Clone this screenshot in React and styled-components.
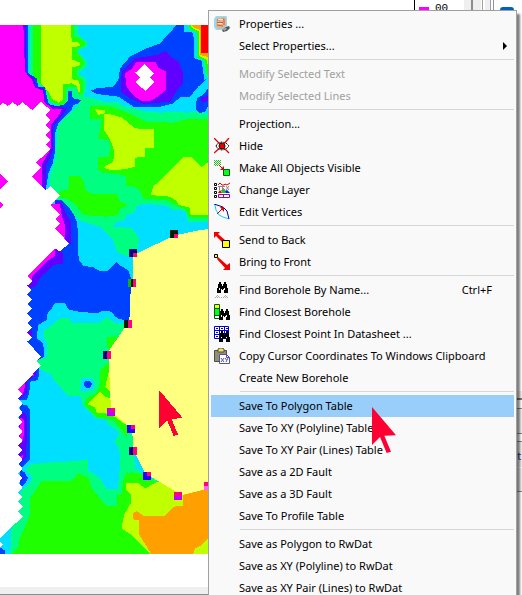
import React from 'react'
import styled, { createGlobalStyle, css } from 'styled-components'

const color = {
    magenta: '#ff00ff',
    purple: '#6000ff',
    blue: '#0040ff',
    cyan: '#00dfff',
    spring: '#00ff80',
    green: '#20ff00',
    lime: '#bfff00',
    orange: '#ff9f00',
    red: '#ff0000',
    polygon: '#ffff80',
    pink: '#ff0080',
    cursor: '#ff0033',
}

// contour bands, painted from back to front
const bands = [
    ['spring', '90,75 234,75 234,100 246,115 260,122 260,140 246,145 230,155 250,172 262,185 262,200 246,210 236,222 256,235 260,245 258,270 250,288 280,295 310,305 350,305 370,318 400,325 440,335 480,338 530,335 560,338 600,335 627,342 627,665 565,665 555,632 520,630 495,615 430,612 410,618 400,640 380,643 375,660 345,668 340,680 395,684 405,698 417,715 412,750 385,770 352,757 340,720 310,690 300,680 240,662 205,630 185,600 165,598 150,560 150,530 168,470 172,380 190,358 215,335 240,310 205,320 180,320 140,300 130,270 115,250 90,225'],
    ['green', '270,320 300,316 340,322 400,345 440,365 520,368 560,358 627,356 627,653 600,655 570,652 555,628 520,612 500,600 430,597 420,572 405,560 378,558 378,528 345,522 310,518 293,510 293,472 325,470 330,450 328,422 295,415 300,390 305,357 270,357'],
    ['lime', '285,328 315,330 315,340 295,345'],
    ['lime', '312,343 330,343 365,352 385,368 405,385 462,388 462,443 435,445 435,470 405,473 405,500 375,508 330,510 312,503 318,496 340,485 342,450 330,418 312,390'],
    ['lime', '550,471 575,471 605,501 627,485 627,645 572,645 568,622 535,615 530,603 510,590 452,585 460,560'],
    ['green', '207,528 240,528 252,545 255,570 280,582 350,582 360,605 385,615 360,625 355,645 320,650 250,645 235,625 215,605 205,598 175,590 178,575 205,568'],
    ['green', '100,75 222,75 222,108 240,115 254,125 254,138 240,142 230,155 250,180 252,195 230,212 230,225 250,243 250,280 238,285 230,262 200,262 195,310 180,316 150,305 145,280 130,258 105,240 100,215'],
    ['lime', '123,75 213,75 215,125 238,128 240,138 215,143 215,178 240,188 238,197 215,203 215,238 238,242 240,275 233,275 232,258 215,250 190,252 188,300 175,308 155,295 145,275 123,250'],
    ['blue', '0,75 85,75 85,220 110,235 115,260 135,262 145,310 160,320 190,315 205,300 205,272 215,272 218,295 245,300 235,310 220,315 215,330 175,370 165,400 166,450 158,490 145,520 137,572 90,560 0,400'],
    ['purple', '0,75 78,75 78,220 100,232 108,258 130,264 140,312 200,325 188,345 158,380 158,450 152,470 137,500 137,570 90,560 0,400'],
    ['magenta', '0,75 70,75 75,215 95,238 105,262 130,272 132,305 160,328 185,328 180,340 153,375 153,445 127,490 127,562 90,560 0,400'],
    ['blue', '165,600 185,600 205,620 222,645 232,670 236,780 250,797 280,802 300,813 325,812 350,785 360,797 385,810 395,840 397,870 388,960 360,958 345,950 340,940 325,932 310,932 290,940 235,935 205,928 195,908 165,908 155,925 143,940 140,960 115,975 110,1015 130,1030 132,1070 115,1080 60,1025 70,828 150,740'],
    ['purple', '165,603 185,607 195,635 213,665 213,730 200,735 165,700'],
    ['magenta', '150,613 180,613 185,645 196,680 196,720 165,700'],
    ['purple', '165,740 188,760 188,790 160,795 140,815 125,828 114,845 108,858 90,865 75,850 75,828'],
    ['magenta', '165,745 165,768 140,785 97,830 95,842 80,828'],
    ['purple', '82,997 96,990 96,1012'],
    ['spring', '175,960 185,953 205,953 215,968 300,968 320,950 345,970 390,975 400,1310 420,1420 627,1420 627,1662 30,1662 33,1590 55,1550 65,1470 80,1460 95,1440 95,1430 75,1410 95,1392 155,1387 230,1383 263,1378 265,1410 300,1435 320,1467 353,1467 360,1400 358,1345 343,1325 358,1305 350,1290 320,1270 320,1258 285,1255 275,1240 250,1220 240,1187 205,1187 165,1145 155,1125 115,1105 110,1082 140,1070 142,1025 132,1015 132,990 150,980'],
    ['green', '125,1443 215,1443 235,1420 265,1433 275,1465 318,1517 352,1517 352,1485 365,1480 370,1440 380,1417 430,1422 470,1450 627,1400 627,1662 35,1662 55,1640 60,1610 75,1580 90,1545 90,1495'],
    ['lime', '378,1448 415,1450 435,1465 470,1447 627,1400 627,1662 450,1662 430,1640 395,1605 365,1585 372,1545 392,1510 393,1485 378,1470'],
    ['orange', '550,1485 627,1465 627,1612 605,1635 585,1645 580,1662 453,1662 440,1640 418,1605 418,1562 400,1558 398,1540 410,1533 432,1548 495,1547 520,1520 550,1517'],
    ['cyan', '400,1350 432,1407 406,1407'],
    ['green', '322,1012 355,1012 360,1030 330,1050 322,1042'],
    ['green', '300,1110 325,1088 335,1240 385,1280 380,1312 365,1290 340,1260 290,1252 255,1215 258,1195 290,1180 300,1150'],
    ['lime', '325,1120 335,1120 335,1180 316,1160'],
    ['lime', '262,1212 270,1203 300,1175 315,1190 335,1195 345,1245 385,1278 370,1270 333,1242 290,1238 285,1222'],
    ['cyan', '245,1133 275,1133 285,1150 280,1168 255,1175 240,1172'],
    ['blue', '255,1143 270,1143 277,1152 270,1163 257,1163 250,1152'],
    ['purple', '260,1149 268,1149 268,1156 260,1156'],
    ['blue', '118,1095 115,1140 90,1145 88,1180 80,1200 50,1200 50,1160'],
    ['purple', '108,1105 108,1125 80,1145 80,1180 65,1195 50,1196 50,1160'],
    ['magenta', '75,1145 75,1160 68,1186 50,1180 50,1165'],
    ['magenta', '90,1128 102,1122 100,1130'],
    ['blue', '60,1212 80,1215 90,1230 90,1380 70,1400 50,1400'],
    ['purple', '60,1235 75,1240 82,1255 82,1300 77,1370 62,1390 50,1390'],
    ['magenta', '60,1252 72,1260 72,1300 66,1330 60,1330'],
    ['magenta', '55,1370 70,1365 66,1382'],
    ['blue', '60,1408 75,1418 84,1435 75,1452 60,1465'],
    ['purple', '62,1425 72,1435 62,1447'],
    ['cyan', '0,1610 33,1585 33,1640 20,1662 0,1662'],
    ['blue', '0,1642 15,1652 15,1662 0,1662'],
    // north-east high and its surroundings
    ['blue', '530,75 627,75 627,230 595,260 570,290 540,292 520,310 480,320 400,320 370,300 355,290 290,282 273,272 290,265 340,260 355,240 360,205 390,170 440,145 480,130'],
    ['purple', '405,175 470,165 495,153 510,168 535,185 548,215 548,250 525,280 510,305 430,312 390,295 363,275 365,215 385,195'],
    ['magenta', '408,187 468,187 475,203 498,215 498,270 470,292 450,303 425,303 405,290 380,262 375,220 395,207'],
    ['cyan', '552,75 627,75 627,232 613,240 605,182 583,175 580,98 552,95'],
    ['spring', '562,75 627,75 627,240 616,225 612,182 590,175 590,98 568,92'],
    ['green', '566,75 627,75 627,225 618,210 615,180 594,172 592,96 572,88'],
    ['lime', '572,75 627,75 627,210 620,180 597,168 597,94 578,86'],
    ['orange', '576,75 627,75 627,172 600,165 600,90 584,84'],
    ['red', '605,75 627,75 627,160 603,160 603,78'],
    ['blue', '627,262 608,285 590,295 588,330 600,340 615,335 627,315'],
    ['purple', '627,288 603,292 605,308 627,302'],
]

const blanks = [
    '434,192 462,219 450,232 462,246 436,273 406,246 420,232 406,218',
    '0,318 10,308 22,318 38,307 53,318 68,307 97,330 123,306 152,330 137,345 152,360 137,375 152,390 137,405 152,420 137,433 152,447 108,488 123,502 96,528 137,570 152,558 180,585 152,615 180,642 165,657 180,672 165,685 207,730 180,755 165,745 82,828 97,843 82,857 96,870 82,884 96,898 82,912 96,926 82,940 96,955 82,970 96,982 82,997 96,1012 82,1025 123,1070 108,1083 123,1097 55,1168 68,1182 55,1196 68,1210 55,1224 68,1238 55,1252 68,1266 55,1280 68,1294 55,1308 68,1322 55,1336 68,1350 55,1364 68,1378 55,1392 68,1406 55,1420 68,1434 55,1449 68,1463 55,1477 68,1491 55,1505 68,1520 55,1535 68,1550 0,1615',
    '0,1624 8,1633 0,1643',
]

const vertices = [
    { x: 510, y: 690, fill: '#002000', half: true },
    { x: 387, y: 747, fill: '#000080', half: true },
    { x: 384, y: 837, fill: '#10b010' },
    { x: 372, y: 960, fill: '#002000' },
    { x: 309, y: 1053, fill: '#000080' },
    { x: 321, y: 1224, fill: '#bf00ff' },
    { x: 381, y: 1275, fill: '#2000ff' },
    { x: 387, y: 1341, fill: '#000080' },
    { x: 429, y: 1416, fill: '#2000ff' },
    { x: 522, y: 1476, fill: '#bf00ff', half: true, top: true },
    { x: 612, y: 1446, fill: '#ff60ff', half: true, top: true },
]

const ContourMap = () => (
    <MapDrawing viewBox="0 75 627 1587" shapeRendering="crispEdges" aria-label="Contour map">
        <rect y="75" width="627" height="1587" fill={color.cyan} />
        {bands.map(([name, points]) => <polygon key={points} points={points} fill={color[name]} />)}
        {blanks.map(points => <polygon key={points} points={points} fill="#fff" />)}
        <path d="M0 522L23 545L0 568ZM0 605L9 615L0 625Z" fill={color.magenta} />
        <polygon
            points="627,687 600,690 522,707 400,765 400,845 393,850 388,963 328,1050 326,1070 333,1235 393,1285 398,1310 401,1350 435,1420 545,1485 627,1465"
            fill={color.polygon}
        />
        {vertices.map(({ x, y, fill, half, top }) => (
            <g key={y}>
                <rect x={x} y={y} width="24" height="24" fill={fill} />
                <rect
                    x={top ? x : x + 12}
                    y={half && !top ? y + 12 : y}
                    width={top ? 24 : 12}
                    height={half || fill === '#bf00ff' || fill === '#2000ff' ? 12 : 24}
                    fill={color.pink}
                />
            </g>
        ))}
        <rect x="393" y="837" width="6" height="24" fill="#002000" />
        <path d="M477 1170L549 1255L514 1256L534 1304L521 1308L501 1260L477 1284Z" fill={color.cursor} />
    </MapDrawing>
)

const Binoculars = () => (
    <path d="M3 0h2v2h1v2h1v-2h1v-2h2v2h1v4h1v5h-4v-4h-1v1h-1v-1h-1v4h-4v-5h1v-4h1zM3 6v2h1v-2zM8 6v2h1v-2z" fillRule="evenodd" />
)

const icons = {
    properties: (
        <>
            <path d="M2 0h10l1 1v11l-3 2H2L0 11V3z" fill="#8fdcf5" />
            <path d="M3 2l7-1 2 1v7l-2 3-6 1-2-3V4z" fill="#e8b08c" />
            <path d="M3 4l7-1M3 6.500h6M3 9l6 1M10 3v6" stroke="#b5694a" fill="none" />
            <path d="M4 3h5v1H4zM4 7h4v1H4z" fill="#fbe3d2" />
            <path d="M8 14l4-3 3-1 1 2-3 3-4 1z" fill="#555" />
            <path d="M9 13l3-1 1 1-3 2z" fill="#aaa" />
        </>
    ),
    hide: (
        <>
            <path d="M2 8l2-3 4-1 4 1 3 3-3 3-4 1-4-1z" fill="#fff" stroke="#000" strokeDasharray="2 1" />
            <circle cx="8" cy="8" r="3" fill="#00a0c0" stroke="#000" />
            <path d="M0 0L8 8L15 15M15 0L8 8L0 15" stroke="#e00000" strokeWidth="1.300" fill="none" />
            <path d="M6 6h4v4H6z" fill="#e00000" />
        </>
    ),
    visible: (
        <>
            <path d="M0 .5h7M0 2.500h7M0 4.500h7" stroke="#20c020" strokeDasharray="1 1" />
            <path d="M1 1.500h6M1 3.500h6M1 5.500h6" stroke="#20c020" strokeDasharray="1 1" />
            <path d="M5 5l5 5" stroke="#e00000" />
            <path d="M10 6v4H6z" fill="#e00000" />
            <path d="M9.500 9.500h6v6h-6z" fill="#00ff20" stroke="#006000" />
        </>
    ),
    layer: (
        <>
            <path d="M.5 1.500h2v2h-2zM.5 5.500h2v2h-2zM.5 9.500h2v2h-2zM.5 13.500h2v2h-2z" fill="#fff" stroke="#000" />
            <path d="M4 3l2-2 2 2 2 0 1-1 2 1 3-2" stroke="#e00000" fill="none" />
            <path d="M4 4.500h4M5.500 4v4M8 4.500h3M8 6.500h2M8 7.500h3M8.500 4v4M12 4l3 4M15 4l-3 4" stroke="#888" fill="none" />
            <path d="M4 11l2-3 2 3z" fill="#e00000" />
            <path d="M7 8h4l1 3H8z" fill="#20c020" />
            <path d="M11 9l2-1 3 3h-4z" fill="#0020e0" />
            <path d="M4.500 12.500h11v3h-11zM9.500 12v3" fill="#fff" stroke="#a000a0" />
        </>
    ),
    edit: (
        <>
            <path d="M1 1L2 6L5 11L9 13L15 15" stroke="#00d8ff" fill="none" />
            <path d="M0 0L9 3L13 7L15 15" stroke="#0000b0" fill="none" />
            <path d="M3 10l5-5" stroke="#e00000" />
            <path d="M6 3h4v5z" fill="#e00000" />
        </>
    ),
    back: (
        <>
            <path d="M0 0h6L4 2l7 6-3 2-6-6-2 2z" fill="#f00000" />
            <path d="M8.500 8.500h7v7h-7z" fill="#ffff00" stroke="#000" />
        </>
    ),
    front: (
        <>
            <path d="M4 3l9 8 3-2v7H9l2-2-8-9z" fill="#f00000" />
            <path d="M.5.5h3v3h-3z" fill="#ffff00" stroke="#000" />
        </>
    ),
    find: (
        <>
            <g transform="translate(2)"><Binoculars /></g>
            <path d="M1 15.500h14M3 13.500h2M11 13.500h2M2 14.500h4M10 14.500h4" stroke="#aaa" strokeDasharray="1 1" />
        </>
    ),
    closest: (
        <>
            <path d="M.5.5h5v14h-5z" fill="#fff" stroke="#006000" />
            <path d="M1 1h4v3H1z" fill="#ffff00" />
            <path d="M1 5h4v6H1z" fill="#00ff20" />
            <path d="M0 4.500h6M0 11.500h6" stroke="#006000" />
            <g transform="translate(4 5)"><Binoculars /></g>
        </>
    ),
    datasheet: (
        <>
            <path d="M.5.5h14v12H.5zM5.500 0v13M10.500 0v13M0 4.500h15M0 8.500h15" fill="#fff" stroke="#0000d0" />
            <path d="M2 2.500h2M7 2.500h2M12 2.500h2M2 6.500h2M7 6.500h2M2 10.500h2" stroke="#0000d0" />
            <g transform="translate(4 5)"><Binoculars /></g>
        </>
    ),
    clipboard: (
        <>
            <path d="M.5 2.500h12v11H.5z" fill="#918f70" stroke="#4c4c44" />
            <path d="M4 1l2-1h2l2 1v3H4z" fill="#e8e070" stroke="#55553c" />
            <path d="M5.500 6.500h7l3 3v6h-10z" fill="#fff" stroke="#5050b0" />
            <path d="M12.500 6.500v3h3" fill="none" stroke="#5050b0" />
            <path d="M7 10l3 4M10 10l-3 4M11 10l1.500 2M14 10l-2 4" stroke="#5050b0" fill="none" />
        </>
    ),
}

const groups = [
    [
        { label: 'Properties ...', icon: 'properties' },
        { label: 'Select Properties...', submenu: true },
    ],
    [
        { label: 'Modify Selected Text', disabled: true },
        { label: 'Modify Selected Lines', disabled: true },
    ],
    [
        { label: 'Projection...' },
        { label: 'Hide', icon: 'hide' },
        { label: 'Make All Objects Visible', icon: 'visible' },
        { label: 'Change Layer', icon: 'layer' },
        { label: 'Edit Vertices', icon: 'edit' },
    ],
    [
        { label: 'Send to Back', icon: 'back' },
        { label: 'Bring to Front', icon: 'front' },
    ],
    [
        { label: 'Find Borehole By Name...', icon: 'find', shortcut: 'Ctrl+F' },
        { label: 'Find Closest Borehole', icon: 'closest' },
        { label: 'Find Closest Point In Datasheet ...', icon: 'datasheet' },
        { label: 'Copy Cursor Coordinates To Windows Clipboard', icon: 'clipboard' },
        { label: 'Create New Borehole' },
    ],
    [
        { label: 'Save To Polygon Table', active: true },
        { label: 'Save To XY (Polyline) Table' },
        { label: 'Save To XY Pair (Lines) Table' },
        { label: 'Save as a 2D Fault' },
        { label: 'Save as a 3D Fault' },
        { label: 'Save To Profile Table' },
    ],
    [
        { label: 'Save as Polygon to RwDat' },
        { label: 'Save as XY (Polyline) to RwDat' },
        { label: 'Save as XY Pair (Lines) to RwDat' },
    ],
]

const ContextMenu = () => (
    <Menu role="menu">
        {groups.map(items => (
            <Group key={items[0].label} role="group">
                {items.map(({ label, icon, shortcut, submenu, disabled, active }) => (
                    <MenuItem key={label} role="menuitem" disabled={disabled} $active={active}>
                        <Icon viewBox="0 0 16 16" aria-hidden="true">{icons[icon]}</Icon>
                        <Label>{label}</Label>
                        {shortcut && <Shortcut>{shortcut}</Shortcut>}
                        {submenu && <Caret viewBox="0 0 4 8"><path d="M0 0L4 4L0 8Z" /></Caret>}
                    </MenuItem>
                ))}
            </Group>
        ))}
    </Menu>
)

const App = () => {
    return (
        <Page>
            <GlobalStyle />
            <Workspace>
                <MapPane>
                    <Canvas>
                        <ContourMap />
                        <Legend>
                            <Swatch />
                            00
                        </Legend>
                    </Canvas>
                    <ScrollTrack />
                </MapPane>
                <Splitter />
                <SidePane>
                    <SideHeader><SideButton aria-label="Options" /></SideHeader>
                    <TabStrip />
                    <SideField />
                    <SideTitle>Dat</SideTitle>
                    <SideFooter />
                </SidePane>
            </Workspace>
            <ContextMenu />
            <Cursor viewBox="477 1170 72 138">
                <path d="M477 1170L549 1255L514 1256L534 1304L521 1308L501 1260L477 1284Z" fill={color.cursor} />
            </Cursor>
        </Page>
    )
}

export default App

const GlobalStyle = createGlobalStyle`
*{
    box-sizing: border-box;
}
body{
    margin: 0;
    background: #fff;
    color: #000;
    font-family: "Noto Sans", "Open Sans", sans-serif;
    font-size: 11px;
}
`
const Page = styled.main`
position: relative;
height: 100vh;
overflow: hidden;
`
const Workspace = styled.div`
display: flex;
height: 100%;
`
const MapPane = styled.section`
flex: 1;
display: flex;
flex-direction: column;
`
const Canvas = styled.div`
flex: 1;
display: flex;
justify-content: space-between;
`
const MapDrawing = styled.svg`
width: 209px;
height: 529px;
margin-top: 25px;
`
const Legend = styled.div`
display: flex;
align-items: center;
gap: 6px;
width: 50px;
height: 16px;
padding-left: 4px;
border-left: 1px solid #000;
font-family: "Liberation Mono", monospace;
font-size: 11px;
`
const Swatch = styled.span`
flex: none;
width: 10px;
align-self: flex-end;
border-bottom: 9px solid ${color.magenta};
`
const ScrollTrack = styled.div`
height: 8px;
background: #efefef;
border-bottom: 1px solid #8c8c8c;
`
const Splitter = styled.div`
width: 30px;
background: linear-gradient(90deg,
    #efefef 7px, #8c8c8c 7px, #8c8c8c 9px, #efefef 9px, #efefef 17px,
    #fff 17px, #fff 18px, #a0a0a0 18px, #a0a0a0 19px, #fff 19px, #fff 21px,
    #efefef 21px, #efefef 26px, #a0a0a0 26px, #a0a0a0 27px, #fff 27px, #fff 29px, #8c8cb0 29px);
`
const SidePane = styled.aside`
width: 28px;
overflow: hidden;
`
const SideHeader = styled.div`
height: 391px;
padding: 7px 6px;
`
const SideButton = styled.button`
display: block;
width: 14px;
height: 14px;
padding: 0;
border: 0;
border-radius: 3px;
background: #0060c0;
`
const TabStrip = styled.div`
height: 9px;
background: #efefef;
border-bottom: 2px solid #787878;
`
const SideField = styled.div`
height: 26px;
margin-top: 8px;
background: #efefef;
border-top: 1px solid #8c8c8c;
border-bottom: 1px solid #8c8c8c;
`
const SideTitle = styled.div`
height: 26px;
margin-top: 7px;
padding-left: 9px;
background: #efefef;
border-top: 1px solid #8c8c8c;
color: #203080;
line-height: 28px;
`
const SideFooter = styled.div`
height: 25px;
background: #efefef;
border-top: 1px solid #fff;
border-bottom: 1px solid #8c8c8c;
`
const Menu = styled.div`
position: absolute;
top: 10px;
left: 208px;
width: 309px;
padding: 2px;
border: 1px solid #a0a0a0;
background: #f9f9f9;
box-shadow: 3px 4px 2px rgba(0, 0, 0, 0.5);
`
const Group = styled.div`
& + &::before{
    content: '';
    display: block;
    height: 1px;
    margin: 2px 0 3px 29px;
    background: #d7d7d7;
}
`
const MenuItem = styled.button`
display: flex;
align-items: center;
width: 100%;
height: 22px;
padding: 0 7px 0 3px;
border: 0;
background: transparent;
color: #000;
font: inherit;
text-align: left;
white-space: nowrap;
&:disabled{
    color: #a0a0a0;
}
${props => props.$active && css`
    background: #99cefa;
`}
`
const Icon = styled.svg`
width: 16px;
height: 16px;
margin-right: 9px;
`
const Label = styled.span`
flex: 1;
padding-bottom: 2px;
`
const Shortcut = styled.span`
padding: 0 15px 2px 0;
`
const Caret = styled.svg`
width: 4px;
height: 8px;
`
const Cursor = styled.svg`
position: absolute;
top: 407px;
left: 372px;
width: 24px;
height: 46px;
pointer-events: none;
`
